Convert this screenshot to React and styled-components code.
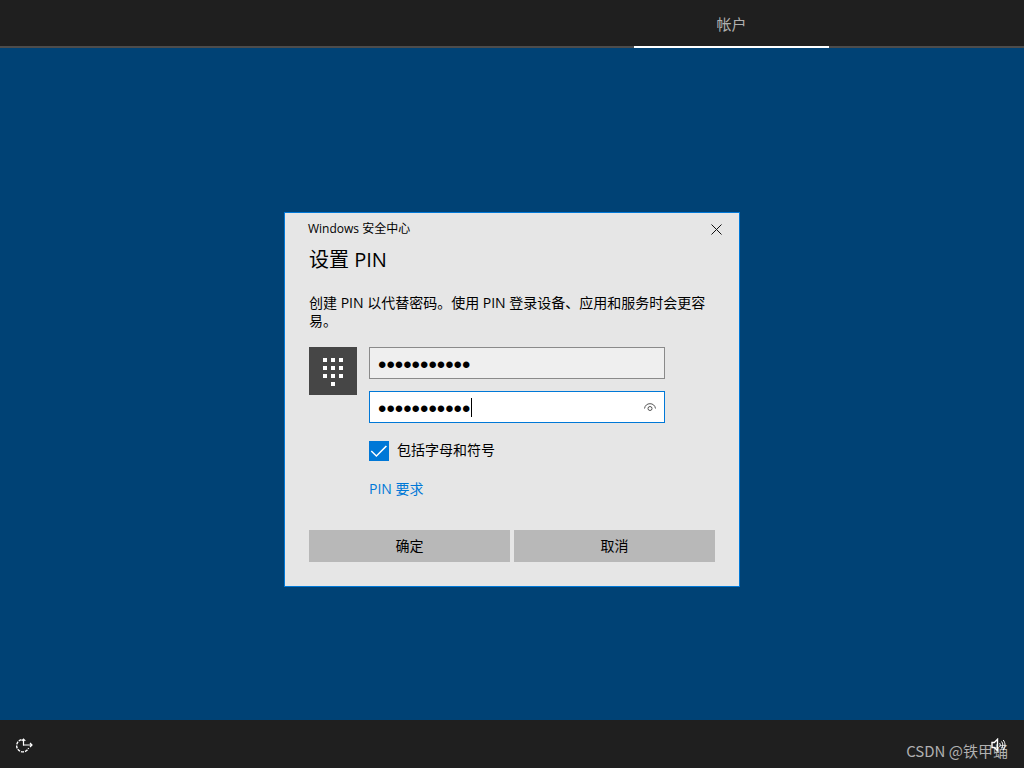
import React, { useState } from 'react';
import styled, { createGlobalStyle } from 'styled-components';

function App() {
  const [pin, setPin] = useState('abcd1234567');
  const [confirmPin, setConfirmPin] = useState('abcd1234567');
  const [withSymbols, setWithSymbols] = useState(true);
  const [revealed, setRevealed] = useState(false);

  const handleSubmit = (e) => {
    e.preventDefault();
  };

  return (
    <Page>
      <GlobalStyle />

      <TopBar>
        <Tab href="#account" aria-current="page">帐户</Tab>
      </TopBar>

      <Main>
        <Dialog role="dialog" aria-labelledby="pin-title">
          <DialogBar>
            <span>Windows 安全中心</span>
            <CloseButton type="button" aria-label="关闭">
              <CloseIcon />
            </CloseButton>
          </DialogBar>

          <Form onSubmit={handleSubmit}>
            <Title id="pin-title">设置 PIN</Title>
            <Description>
              创建 PIN 以代替密码。使用 PIN 登录设备、应用和服务时会更容易。
            </Description>

            <Credential>
              <Tile>
                <KeypadIcon />
              </Tile>
              <Fields>
                <Field>
                  <PinInput
                    type="password"
                    aria-label="新的 PIN"
                    value={pin}
                    onChange={(e) => setPin(e.target.value)}
                  />
                </Field>
                <Field $active>
                  <PinInput
                    type={revealed ? 'text' : 'password'}
                    aria-label="确认 PIN"
                    value={confirmPin}
                    onChange={(e) => setConfirmPin(e.target.value)}
                  />
                  <Caret />
                  <RevealButton
                    type="button"
                    aria-label="显示 PIN"
                    onClick={() => setRevealed(!revealed)}
                  >
                    <EyeIcon />
                  </RevealButton>
                </Field>
                <CheckLabel>
                  <Checkbox
                    type="checkbox"
                    checked={withSymbols}
                    onChange={(e) => setWithSymbols(e.target.checked)}
                  />
                  包括字母和符号
                </CheckLabel>
                <TextLink href="#requirements">PIN 要求</TextLink>
              </Fields>
            </Credential>

            <Actions>
              <ActionButton type="submit">确定</ActionButton>
              <ActionButton type="button">取消</ActionButton>
            </Actions>
          </Form>
        </Dialog>
      </Main>

      <BottomBar>
        <IconButton type="button" aria-label="轻松使用">
          <EaseIcon />
        </IconButton>
        <IconButton type="button" aria-label="音量">
          <VolumeIcon />
        </IconButton>
        <Watermark>CSDN @铁甲蛹</Watermark>
      </BottomBar>
    </Page>
  );
}

// Icons
const CloseIcon = () => (
  <svg width="11" height="11" viewBox="0 0 11 11" fill="none" stroke="#111" aria-hidden="true">
    <path d="M.5.5l10 10M10.5.5l-10 10" />
  </svg>
);

const KeypadIcon = () => (
  <svg width="20" height="28" viewBox="0 0 20 28" fill="#fff" aria-hidden="true">
    {[0, 8, 16].map((y) =>
      [0, 8, 16].map((x) => <rect key={`${x}-${y}`} x={x} y={y} width="4" height="4" />)
    )}
    <rect x="8" y="24" width="4" height="4" />
  </svg>
);

const EyeIcon = () => (
  <svg width="12" height="8" viewBox="0 0 12 8" fill="none" stroke="#555" aria-hidden="true">
    <path d="M.5 5.5C1 2.4 3.2.7 6 .7s5 1.7 5.5 4.8" />
    <circle cx="6" cy="5.5" r="2" />
  </svg>
);

const EaseIcon = () => (
  <svg width="17" height="15" viewBox="0 0 17 15" fill="none" stroke="#fff" aria-hidden="true">
    <path d="M5.5 1.6A6.2 6.2 0 1 0 12.6 10" strokeWidth="1.4" strokeDasharray="3 1" />
    <path d="M7.5 7.5V1M5.7 2.8l1.8-1.8 1.8 1.8" strokeWidth="1.2" />
    <path d="M7 7H16M14 5l2 2-2 2" strokeWidth="1.2" />
  </svg>
);

const VolumeIcon = () => (
  <svg width="15" height="14" viewBox="0 0 15 14" fill="none" stroke="#fff" aria-hidden="true">
    <path d="M1 4.5h2.3L6.5 1.3v11.4L3.3 9.5H1z" strokeWidth="1.4" />
    <path d="M8.5 5c1 1.2 1 2.8 0 4M10.5 3.5c1.8 2 1.8 5 0 7M12.2 2c2.4 3 2.4 7 0 10" />
  </svg>
);

// Styles
const GlobalStyle = createGlobalStyle`
  * {
    box-sizing: border-box;
  }

  body {
    margin: 0;
    background: #004275;
    color: #000;
    font-family: 'Open Sans', 'Noto Sans CJK SC', sans-serif;
    font-size: 14px;
    line-height: 18px;
  }

  button,
  input {
    font: inherit;
    color: inherit;
  }
`;

const Page = styled.div`
  display: flex;
  flex-direction: column;
  min-height: 100vh;
`;

const TopBar = styled.nav`
  display: flex;
  justify-content: flex-end;
  height: 48px;
  padding-right: 195px;
  background: #1f1f1f;
  box-shadow: inset 0 -2px #4c4c4c;
`;

const Tab = styled.a`
  display: flex;
  align-items: center;
  justify-content: center;
  width: 195px;
  padding-top: 2px;
  border-bottom: 2px solid #fff;
  color: #b0b0b0;
  font-size: 15px;
  text-decoration: none;
`;

const Main = styled.main`
  display: flex;
  flex: 1;
  align-items: center;
  justify-content: center;
  padding-top: 31px;
`;

const Dialog = styled.section`
  width: 456px;
  max-width: 100%;
  border: 1px solid #0078d7;
  background: #e6e6e6;
`;

const DialogBar = styled.header`
  display: flex;
  align-items: center;
  justify-content: space-between;
  height: 32px;
  padding-left: 23px;
  font-size: 12px;
`;

const CloseButton = styled.button`
  display: flex;
  align-items: center;
  justify-content: center;
  width: 45px;
  height: 32px;
  padding: 0;
  border: 0;
  background: none;
`;

const Form = styled.form`
  padding: 0 24px 24px;
`;

const Title = styled.h1`
  margin: 0 0 19px;
  font-size: 20px;
  font-weight: 400;
  line-height: 30px;
`;

const Description = styled.p`
  margin: 0 0 17px;
`;

const Credential = styled.div`
  display: flex;
  gap: 12px;
  margin-bottom: 32px;
`;

const Tile = styled.div`
  display: flex;
  align-items: center;
  justify-content: center;
  width: 48px;
  height: 48px;
  padding-top: 2px;
  background: #464646;
`;

const Fields = styled.div`
  display: flex;
  flex-direction: column;
  align-items: flex-start;
  gap: 12px;
`;

const Field = styled.div`
  display: flex;
  align-items: center;
  width: 296px;
  height: 32px;
  padding: 0 8px;
  border: 1px solid ${({ $active }) => ($active ? '#0078d7' : '#8a8a8a')};
  background: ${({ $active }) => ($active ? '#fff' : '#efefef')};
`;

const PinInput = styled.input`
  field-sizing: content;
  height: 30px;
  padding: 4px 0 0;
  border: 0;
  outline: none;
  background: none;
  font-family: 'Liberation Sans', sans-serif;
  font-size: 24px;
`;

const Caret = styled.span`
  width: 1px;
  height: 19px;
  margin-left: 1px;
  background: #000;
`;

const RevealButton = styled.button`
  display: flex;
  margin-left: auto;
  padding: 0;
  border: 0;
  background: none;
`;

const CheckLabel = styled.label`
  display: flex;
  align-items: flex-start;
  gap: 8px;
  padding-top: 6px;
`;

const Checkbox = styled.input`
  appearance: none;
  width: 20px;
  height: 20px;
  margin: 0;
  border: 0;
  background: #fff;
  box-shadow: inset 0 0 0 1px #0078d7;

  &:checked {
    background: #0078d7;
  }

  &:checked::before {
    content: '';
    display: block;
    width: 20px;
    height: 20px;
    background: #fff;
    clip-path: polygon(9% 52%, 14% 47%, 37% 70%, 84% 22%, 90% 27%, 37% 80%);
  }
`;

const TextLink = styled.a`
  margin-top: 7px;
  color: #0078d7;
  text-decoration: none;
`;

const Actions = styled.div`
  display: grid;
  grid-template-columns: 1fr 1fr;
  gap: 4px;
`;

const ActionButton = styled.button`
  height: 32px;
  padding: 0;
  border: 0;
  background: #b8b8b8;
`;

const BottomBar = styled.footer`
  position: relative;
  display: flex;
  align-items: center;
  justify-content: space-between;
  height: 48px;
  padding: 2px 18px 0 16px;
  background: #1f1f1f;
`;

const IconButton = styled.button`
  display: flex;
  z-index: 1;
  padding: 0;
  border: 0;
  background: none;
`;

const Watermark = styled.span`
  position: absolute;
  right: 16px;
  bottom: 8px;
  color: #b0b0b0;
  font-family: 'Noto Sans CJK SC', sans-serif;
  font-size: 15px;
  pointer-events: none;
`;

export default App;
